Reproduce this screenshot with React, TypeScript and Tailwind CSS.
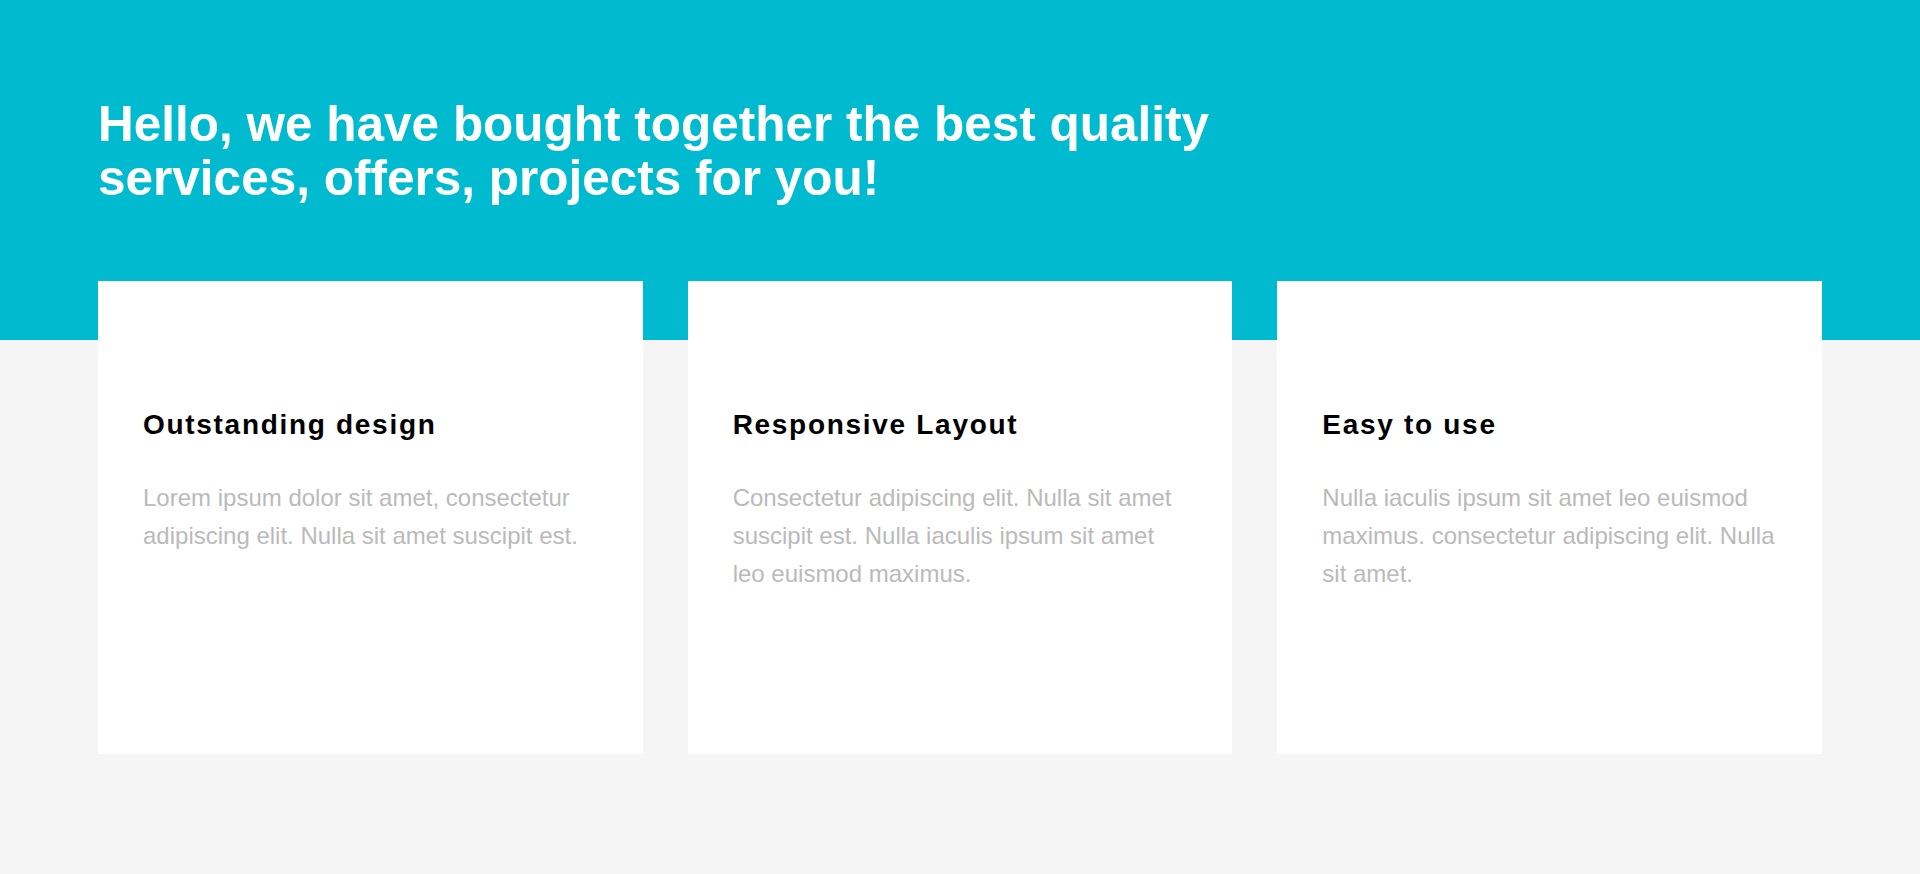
const FEATURES = [
  {
    title: 'Outstanding design',
    text: 'Lorem ipsum dolor sit amet, consectetur adipiscing elit. Nulla sit amet suscipit est.',
  },
  {
    title: 'Responsive Layout',
    text: 'Consectetur adipiscing elit. Nulla sit amet suscipit est. Nulla iaculis ipsum sit amet leo euismod maximus.',
  },
  {
    title: 'Easy to use',
    text: 'Nulla iaculis ipsum sit amet leo euismod maximus. consectetur adipiscing elit. Nulla sit amet.',
  },
];

export default function App() {
  return (
    <main className="min-h-screen bg-[#f5f5f5] font-['Liberation_Sans',Arial,sans-serif]">
      {/* Hero band */}
      <section className="bg-[#00bacf] h-[340px] px-[98px] pt-[97px]">
        <h1 className="max-w-[1180px] text-[49.5px] leading-[54px] font-bold text-white">
          Hello, we have bought together the best quality services, offers, projects for you!
        </h1>
      </section>

      {/* Feature cards */}
      <section className="px-[98px] -mt-[59px] pb-[120px]">
        <div className="grid grid-cols-3 gap-[45px]">
          {FEATURES.map(f => (
            <div key={f.title} className="bg-white h-[473px] px-[45px] pt-[128px]">
              <h3 className="text-[28px] leading-[32px] font-bold text-black tracking-[1.7px] mb-[38px]">
                {f.title}
              </h3>
              <p className="text-[24px] leading-[38px] text-[#bababa]">{f.text}</p>
            </div>
          ))}
        </div>
      </section>
    </main>
  );
}
